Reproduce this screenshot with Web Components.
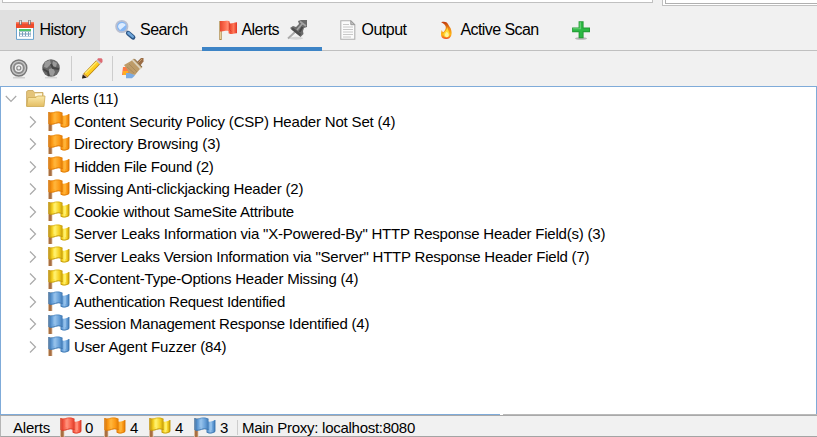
<!DOCTYPE html>
<html lang="en"><head><meta charset="utf-8"><title>Alerts</title>
<style>html,body{margin:0;width:817px;height:437px;overflow:hidden;background:#f1f1f1}body{font:15px "Liberation Sans",Arial,sans-serif;color:#000}</style></head><body>
<alerts-app></alerts-app>
<script>
const flag = (c) => {
  const p = {
    red:['#ff8f78','#f8604a','#dc3c28'], orange:['#ffb338','#fc9a16','#dd7906'],
    yellow:['#fff06a','#f5cf1e','#c39a0a'], blue:['#93c0ea','#669fd8','#3f78b2'] }[c];
  return `<svg width="22" height="20" viewBox="0 0 22 20"><defs><linearGradient id="g"><stop offset="0" stop-color="${p[2]}"/><stop offset=".2" stop-color="${p[1]}"/><stop offset=".45" stop-color="${p[0]}"/><stop offset=".75" stop-color="${p[1]}"/><stop offset="1" stop-color="${p[2]}"/></linearGradient></defs>
  <path d="M0 1h4.5v19H0z" fill="#e6cdb2"/><path d="M.8 13h2.9v7H.8z" fill="#a86f42"/><path d="M0 1h2v12H0z" fill="${p[2]}" opacity=".7"/>
  <path d="M14 4.5c3 .5 4-.3 7-1.5v12c-3 1.8-6 1.8-8.5.5V12z" fill="url(#g)"/><path d="M13 15.3c3 1.2 5 1 8-.8V3" fill="none" stroke="${p[2]}" stroke-width=".9"/>
  <path d="M1.5 1.8C5 2 6 .3 9 .5c2 0 4 .5 5.5 1.3V13c-3-1.5-5-1.3-7-.5-2 1-4 1.2-6 1z" fill="url(#g)"/><path d="M1.5 13.2c2 .2 4 0 6-.8s4-.8 7 .3" fill="none" stroke="${p[2]}" stroke-width="1"/><path d="M1.5 2C5 2.2 6 .9 9 1c2 0 4 .3 5.5 1.1" fill="none" stroke="${p[2]}" stroke-width=".7" opacity=".7"/><path d="M6.5 3v7M17 5.5v7.5" stroke="${p[0]}" stroke-width="1.8"/></svg>`;
};
const icons = {
 calendar:`<svg width="18" height="20" viewBox="0 0 18 20"><path d="M.5 3h17v16.4H.5z" fill="#fff" stroke="#6aa4cf"/><path d="M0 2h18v6H0z" fill="#ee4b2c"/><path d="M0 2h18v1.5H0z" fill="#f98063"/><path d="M3 9h12v2.3H3z" fill="#50c56b"/><path d="M3 11.5h12v5H3z" fill="#7a9fbd"/><path d="M4 12h2v1.5H4zm3 0h2v1.5H7zm3 0h2v1.5h-2zm3 0h1.5v1.5H13zm-9 2.5h2V16H4zm3 0h2V16H7zm3 0h2V16h-2zm3 0h1.5V16H13z" fill="#fff"/><path d="M4.5 0v5m9-5v5" stroke="#707070" stroke-width="2.4"/><path d="M4.5.5v3.8m9-3.8v3.8" stroke="#e5e5e5"/></svg>`,
 search:`<svg width="21" height="20" viewBox="0 0 21 20"><path d="m10.5 10 3 3" stroke="#9aa5b4" stroke-width="2.2"/><path d="m13.3 13.2 4.7 4.1" stroke="#2d5686" stroke-width="4.8" stroke-linecap="round"/><path d="m13.4 13 4.3 3.6" stroke="#6fa6da" stroke-width="2.5" stroke-linecap="round"/><circle cx="6.8" cy="6.5" r="5.7" fill="#84b6f4" stroke="#b9bfd0" stroke-width="1.8"/><path d="M3 7c0-4.5 6-5.5 7.8-2L8 7.4 5 10Z" fill="#dcecff"/></svg>`,
 tabflag:`<svg width="19" height="20" viewBox="0 0 19 20"><defs><linearGradient id="r"><stop stop-color="#e4482e"/><stop offset=".3" stop-color="#ff6e51"/><stop offset=".45" stop-color="#ff8b6f"/><stop offset=".6" stop-color="#ee4a30"/><stop offset=".8" stop-color="#ff7959"/><stop offset="1" stop-color="#e13423"/></linearGradient></defs><path d="M.3 1h2.4v19H.3z" fill="#ae8a47"/><path d="M1.5 1v18" stroke="#f0d69d" stroke-width=".9"/><path d="M1 1c4 .5 6-1 9.5.3v2c2.5.4 4-.7 7.5-1v11c-3-.5-6 2-8.5 0v-2C7 10 5 12 1 11.5z" fill="url(#r)"/><path d="M10.5 2.5v7l2 2" fill="none" stroke="#d23a28" stroke-width=".7"/></svg>`,
 pin:`<svg width="22" height="20" viewBox="0 0 22 20"><ellipse cx="9" cy="18.2" rx="7" ry="1.5" fill="#d6d6d6"/><path d="M1 18.5 8 12" stroke="#aaa" stroke-width="1.8"/><path d="m11 1 3-1h6v7l-3 1-1 3 .5 3-3 3L3 8l3-2 3 1 3-3z" fill="#6c6c6c"/><path d="M5 8.5 13.5 15" stroke="#4e4e4e" stroke-width="2.4"/><path d="m10 10 5-6M13 1.5l6 4.5" stroke="#a5a5a5" stroke-width="1.6"/><path d="m12.5 12 3-5" stroke="#484848" stroke-width="2"/></svg>`,
 page:`<svg width="16" height="20" viewBox="0 0 16 20"><path d="M.8.7h10l4 4v14.5H.8z" fill="#fbfbfb" stroke="#b0b0b0" stroke-width="1.1"/><path d="M10.8.7v4h4z" fill="#c0c0c0" stroke="#999"/><path d="M3 4.5h6M3 7h10M3 9.5h10M3 12h10M3 14.5h10M3 17h8" stroke="#c8c8c8"/></svg>`,
 flame:`<svg width="12" height="19" viewBox="0 0 12 19"><defs><linearGradient id="f" x2="0" y2="1"><stop stop-color="#bf360c"/><stop offset=".4" stop-color="#ed8814"/><stop offset=".75" stop-color="#ffb514"/><stop offset="1" stop-color="#ed4b24"/></linearGradient></defs><path d="M.6 1C7-.5 7 4 9.5 7c2.6 6 .5 11-4 11C0 18.3-1 14 .8 9c.5 2 1.2 2.4 2.2 1.4C6 7 5.500 4-.0 1z" fill="url(#f)"/><path d="M6 6c0 5-5 5-3 9 2 3 7 1 5-4z" fill="#ffda37"/><path d="M5.500 11c-3 3-1 5 .5 5s3-2 0-5z" fill="#fff39c"/></svg>`,
 plus:`<svg width="18" height="19" viewBox="0 0 18 19"><ellipse cx="9" cy="17.5" rx="6" ry="1.3" fill="#b5b5b5"/><path d="M6.6.3h5v6.2H18v4.8h-6.4v6h-5v-6H.1V6.5h6.5z" fill="#239b35"/><path d="M7.6 1.3h3v6.2H17v2.8h-6.4v6h-3v-6H1.1V7.5h6.5z" fill="#2cb944"/><path d="M7.6 1.3h1.4v7H1.1v-1h6.5z" fill="#67cf76"/></svg>`,
 target:`<svg width="20" height="20" viewBox="0 0 20 20"><path d="M3 18h12v1.5H3z" fill="#d0d0d0"/><circle cx="8.8" cy="9" r="8" fill="#c6c6c6" stroke="#777" stroke-width="1.4"/><circle cx="8.8" cy="9" r="5.3" fill="#8a8a8a" stroke="#8a8a8a" stroke-width="1.2"/><circle cx="8.8" cy="9" r="3.3" fill="#8a8a8a" stroke="#eee" stroke-width="1.4"/><circle cx="8.8" cy="9" r="1.4" fill="#eee"/></svg>`,
 globe:`<svg width="20" height="20" viewBox="0 0 20 20"><path d="M3 18h12v1.4H3z" fill="#d5d5d5"/><circle cx="9" cy="9" r="8.8" fill="#686868"/><path d="m3 3 5-2 1 4-4 4-3-1zM11 2l4 2-1 4-4-1zM7 10l4-1 2 4-2 4-4-1z" fill="#9a9a9a"/><path d="m1 10 5 3 1 4M9 5l2 4 6 1" stroke="#454545" stroke-width="2" fill="none"/></svg>`,
 pencil:`<svg width="21" height="21" viewBox="0 0 21 21"><path d="M1.3 15.800 14.300 2.300l4 3.700L5.300 19.600z" fill="#b9800a"/><path d="M2.300 15.800 14.600 3.200l2.800 2.500L5.500 18.300z" fill="#ffce22"/><path d="M3.200 15.400 14.800 3.700" stroke="#fff07a" stroke-width="1.2"/><path d="M16 .3h3.500L20.500 1.500v2.600L18.700 5.700l-3.700-3.700z" fill="#de6a72"/><path d="m14 2.800 1.300-1.300 3.900 3.600-1.300 1.400z" fill="#c9c5c5"/><path d="m0 20.500 1.200-5 4.500 3.800z" fill="#d9a878"/><path d="m0 20.600.8-4.200 4 3.400z" fill="#25201e"/></svg>`,
 brush:`<svg width="22" height="21" viewBox="0 0 22 21"><path d="m14 5 3.500-3.500L19 0h2.500v3.500L18 8z" fill="#9b6d45"/><path d="m16 5 4-4" stroke="#c69b6d" stroke-width="1"/><path d="M1 9h5l3 5-4 3H0z" fill="#ff7a44"/><path d="M1 13h5v4H1z" fill="#ffad21"/><path d="M4 15h6l3 2.500-3 2.700H4z" fill="#7cabe2"/><path d="m2 7 7-4 3-2.500 8.500 8.500-3 2.500L13 17l-6-2-2-4z" fill="#bd9b68"/><path d="m5 9 7 6M7 6l8 8" stroke="#a5855a" stroke-width=".8"/><path d="m10.500 2 8.500 9" stroke="#ddd3bf" stroke-width="1.800"/><path d="m12.500 1 7.500 8" stroke="#80694d"/></svg>`,
 folder:`<svg width="21" height="18" viewBox="0 0 21 18"><defs><linearGradient id="o" x2="0" y2="1"><stop stop-color="#fbe9a9"/><stop offset="1" stop-color="#e3bd62"/></linearGradient></defs><path d="M.6 16V1.5L2 .5h5l1.5 2H17V15z" fill="#e4c479" stroke="#c5a359" stroke-width=".8"/><path d="m9 3.5 7-.3v3H9z" fill="#fff8dd"/><path d="M.7 16.5 2 7.5h8L11.5 6H19l-1 10.5z" fill="url(#o)" stroke="#cca954" stroke-width=".8"/></svg>`,
 right:`<svg width="8" height="12" viewBox="0 0 8 12"><path d="m1 .5 5.5 5.5L1 11.5" fill="none" stroke="#a9a9a9" stroke-width="1.2"/></svg>`,
 down:`<svg width="12" height="8" viewBox="0 0 12 8"><path d="m.8 1 5.2 5.5L11.2 1" fill="none" stroke="#a9a9a9" stroke-width="1.2"/></svg>`
};
class UiIcon extends HTMLElement {
  connectedCallback(){
    const n=this.getAttribute('name');
    this.attachShadow({mode:'open'}).innerHTML=`<style>:host{display:block;flex:none}svg{display:block;overflow:visible}</style>${n.startsWith('flag-')?flag(n.slice(5)):icons[n]}`;
  }
}
customElements.define('ui-icon',UiIcon);
/* A single-line label whose letter spacing is adjusted to its declared width. */
class FitText extends HTMLElement {
  connectedCallback(){
    const text=this.textContent;
    this.textContent='';
    this.attachShadow({mode:'open'}).innerHTML=`<style>:host{display:block;flex:none;white-space:pre;line-height:20px}span{display:inline-block}</style><span></span>`;
    const s=this.shadowRoot.querySelector('span');s.textContent=text;
    const w=+this.getAttribute('width');
    if(w){s.style.letterSpacing=(w-s.getBoundingClientRect().width)/text.length+'px';this.style.width=w+'px'}
  }
}
customElements.define('fit-text',FitText);
class TabItem extends HTMLElement {
  connectedCallback(){
    this.attachShadow({mode:'open'}).innerHTML=`<style>:host{display:flex;box-sizing:border-box;height:41px;align-items:center;flex:none;font-size:16px;border-bottom:1px solid #c0c0c0}:host([hovered]){background:#e0e0e0;background-clip:padding-box}:host([selected]){border-bottom:4px solid #3d84c6;padding-top:3px}</style><slot></slot>`;
  }
}
customElements.define('tab-item',TabItem);
class AlertNode extends HTMLElement {
  connectedCallback(){
    this.attachShadow({mode:'open'}).innerHTML=`<style>:host{display:flex;align-items:center;height:22.5px;padding-left:28px}ui-icon.f{margin-left:11px;margin-right:4px;margin-top:-1px}</style><ui-icon name="right"></ui-icon><ui-icon class="f" name="flag-${this.getAttribute('risk')}"></ui-icon><slot></slot>`;
  }
}
customElements.define('alert-node',AlertNode);
class AlertsApp extends HTMLElement {
  connectedCallback(){
    const rows=[['orange','Content Security Policy (CSP) Header Not Set (4)',321.3],['orange','Directory Browsing (3)',146.3],['orange','Hidden File Found (2)',139.5],['orange','Missing Anti-clickjacking Header (2)',229.2],['yellow','Cookie without SameSite Attribute',220],['yellow','Server Leaks Information via "X-Powered-By" HTTP Response Header Field(s) (3)',531.3],['yellow','Server Leaks Version Information via "Server" HTTP Response Header Field (7)',515.3],['yellow','X-Content-Type-Options Header Missing (4)',284.3],['blue','Authentication Request Identified',211],['blue','Session Management Response Identified (4)',295.2],['blue','User Agent Fuzzer (84)',152.4]];
    this.attachShadow({mode:'open'}).innerHTML=`<style>
:host{display:flex;flex-direction:column;width:817px;height:437px;background:#f1f1f1}
.edges{display:flex;height:10px;flex:none;align-items:flex-start}
.left{box-sizing:border-box;width:651px;height:3px;margin-left:2px;background:#fff;border:solid #c0c0c0;border-width:0 1px 1px}
.right{box-sizing:border-box;width:155px;height:6px;margin-left:9px;background:#fff;border:solid #c0c0c0;border-width:0 0 1px 1px;padding:0 0 1px 2px}
.inner{height:4px;box-sizing:border-box;border-left:1px solid #b0b0b0;border-bottom:1px solid #b0b0b0}
.tabs{display:flex;height:41px;flex:none}.fill{flex:1;border-bottom:1px solid #c0c0c0}
.tools{display:flex;height:35px;flex:none;align-items:center}
.sep{width:1px;height:25px;background:#cdcdcd}
.tree{box-sizing:border-box;height:329px;flex:none;background:#fff;border:1px solid #7fabd9;border-bottom:0;padding-top:1px}
.root{display:flex;align-items:center;height:22.5px;padding-left:4px}
.edge{display:flex;height:2px;flex:none;box-sizing:border-box;border-bottom:1px solid #a9a9a9;background:#b9b9b9;margin-top:-1px}
.edge i{width:500px;background:#7fabd9}.edge b{width:3px;background:#fff}
.status{display:flex;align-items:center;height:21px;box-sizing:border-box;padding-left:12px;border-left:1px solid #b5b5b5;border-bottom:1px solid #a4a4a4;padding-top:3px}
</style>
<div class="edges"><div class="left"></div><div class="right"><div class="inner"></div></div></div>
<div class="tabs">
<tab-item hovered style="width:100px;padding-left:16px"><ui-icon name="calendar"></ui-icon><fit-text width="46" style="margin-left:5.5px">History</fit-text></tab-item>
<tab-item style="width:102px;padding-left:15px"><ui-icon name="search"></ui-icon><fit-text width="47.5" style="margin-left:4px">Search</fit-text></tab-item>
<tab-item selected style="width:120px;padding-left:17px"><ui-icon name="tabflag"></ui-icon><fit-text width="37.5" style="margin-left:3.5px">Alerts</fit-text><ui-icon name="pin" style="margin-left:8px"></ui-icon></tab-item>
<tab-item style="width:101px;padding-left:18px"><ui-icon name="page"></ui-icon><fit-text width="45" style="margin-left:5.5px">Output</fit-text></tab-item>
<tab-item style="width:132px;padding-left:17.5px"><ui-icon name="flame"></ui-icon><fit-text width="78" style="margin-left:8px">Active Scan</fit-text></tab-item>
<tab-item style="width:50px;padding-left:17px"><ui-icon name="plus"></ui-icon></tab-item><div class="fill"></div></div>
<div class="tools"><ui-icon name="target" style="margin-left:10px"></ui-icon><ui-icon name="globe" style="margin-left:12px"></ui-icon><div class="sep" style="margin-left:9px"></div><ui-icon name="pencil" style="margin-left:10px"></ui-icon><div class="sep" style="margin-left:9px"></div><ui-icon name="brush" style="margin-left:9px"></ui-icon></div>
<div class="tree"><div class="root"><ui-icon name="down"></ui-icon><ui-icon name="folder" style="margin:-1px 4px 0 9px"></ui-icon><fit-text width="67.5">Alerts (11)</fit-text></div>
${rows.map(r=>`<alert-node risk="${r[0]}"><fit-text width="${r[2]}">${r[1]}</fit-text></alert-node>`).join('')}</div>
<div class="edge"><i></i><b></b></div>
<div class="status"><fit-text width="37">Alerts</fit-text>${[['red',0],['orange',4],['yellow',4],['blue',3]].map((s,i)=>`<ui-icon name="flag-${s[0]}" style="margin-left:${i?14:10}px;margin-right:${i?4:3}px;margin-top:-2px"></ui-icon><fit-text width="9" style="margin-right:${i<3?-4:0}px">${s[1]}</fit-text>`).join('')}<div class="sep" style="height:15px;margin-left:8px"></div><fit-text width="173" style="margin-left:4px">Main Proxy: localhost:8080</fit-text></div>`;
  }
}
customElements.define('alerts-app',AlertsApp);
</script></body></html>
